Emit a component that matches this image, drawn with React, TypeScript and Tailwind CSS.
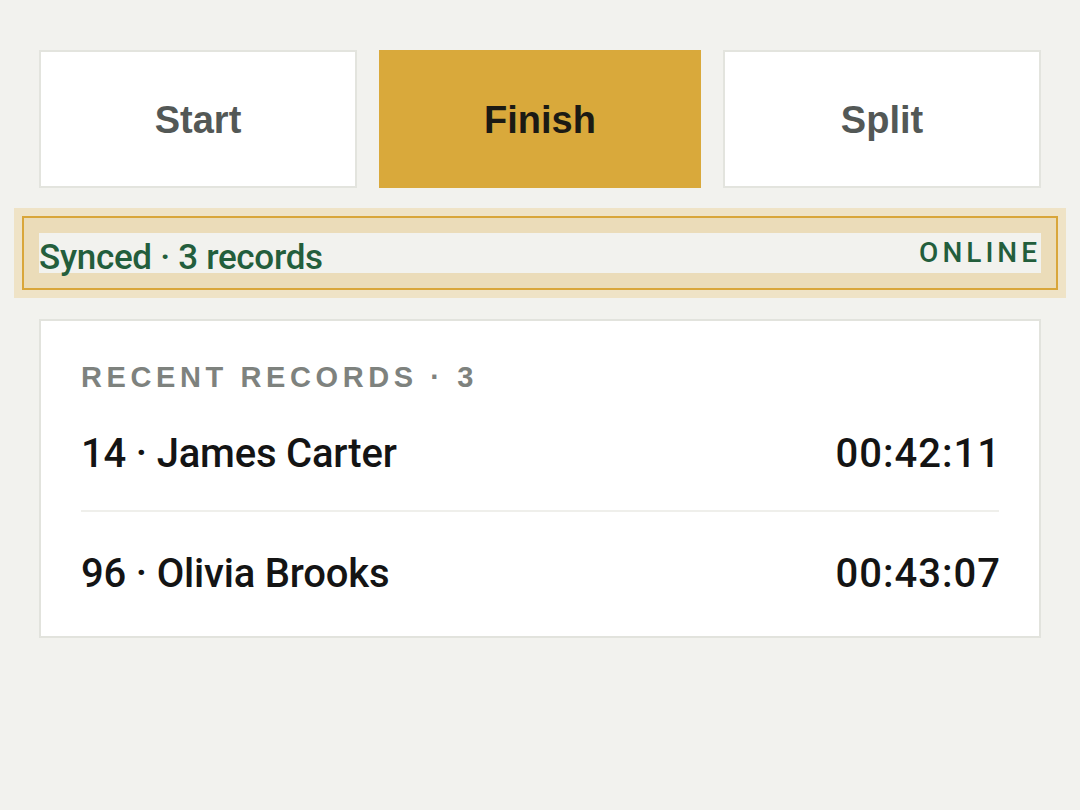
import React from 'react';

type RecordRow = {
  bib: number;
  name: string;
  time: string;
};

const records: RecordRow[] = [
  { bib: 14, name: 'James Carter', time: '00:42:11' },
  { bib: 96, name: 'Olivia Brooks', time: '00:43:07' },
];

const sans = { fontFamily: '"Liberation Sans", Arial, sans-serif' };
const round = { fontFamily: 'Roboto, "Noto Sans", sans-serif' };

const App: React.FC = () => {
  const active = 'Finish';
  const modes = ['Start', 'Finish', 'Split'];

  return (
    <div className="min-h-[810px] w-full bg-[#f2f2ee] px-[39px] pt-[50px]">
      {/* Mode buttons */}
      <div className="grid grid-cols-3 gap-[24px]" style={sans}>
        {modes.map((mode) =>
          mode === active ? (
            <button
              key={mode}
              className="-mx-[2px] flex h-[138px] items-center justify-center bg-[#d9a93b] pt-[2px] text-[38px] font-bold text-[#1b1a14]"
            >
              {mode}
            </button>
          ) : (
            <button
              key={mode}
              className="flex h-[138px] items-center justify-center border-2 border-[#e3e4de] bg-white pt-[2px] text-[38px] font-bold text-[#535856]"
            >
              {mode}
            </button>
          )
        )}
      </div>

      {/* Sync status */}
      <div className="-mx-[25px] mt-[20px] bg-[#efe3c6] p-[8px]">
        <div className="border-2 border-[#d9a63a] bg-[#ebdcb9] p-[15px]">
          <div className="flex h-[40px] items-start justify-between bg-[#f2f2ee]" style={round}>
            <span className="block h-[40px] text-[35px] font-medium leading-[50px] tracking-[-0.3px] text-[#235e3c]">
              Synced · 3 records
            </span>
            <span className="text-[28px] font-medium leading-[40px] tracking-[4px] text-[#235e3c]">
              ONLINE
            </span>
          </div>
        </div>
      </div>

      {/* Recent records */}
      <div className="mt-[21px] border-2 border-[#e2e3dd] bg-white px-[40px] pb-[37px] pt-[40px]">
        <div
          className="text-[29px] font-bold uppercase leading-[32px] tracking-[4.6px] text-[#7e827e]"
          style={sans}
        >
          Recent Records · 3
        </div>
        <div className="mt-[36px]" style={round}>
          {records.map((r, i) => (
            <div
              key={r.bib}
              className={`flex items-center justify-between text-[40px] font-medium leading-[50px] tracking-[-0.2px] text-[#141414] ${
                i === 0 ? 'border-b-2 border-[#efefeb] pb-[31px]' : 'pt-[37px]'
              }`}
            >
              <span>
                {r.bib} · {r.name}
              </span>
              <span className="-mr-[2px] tabular-nums tracking-[1px]">{r.time}</span>
            </div>
          ))}
        </div>
      </div>
    </div>
  );
};

export default App;
